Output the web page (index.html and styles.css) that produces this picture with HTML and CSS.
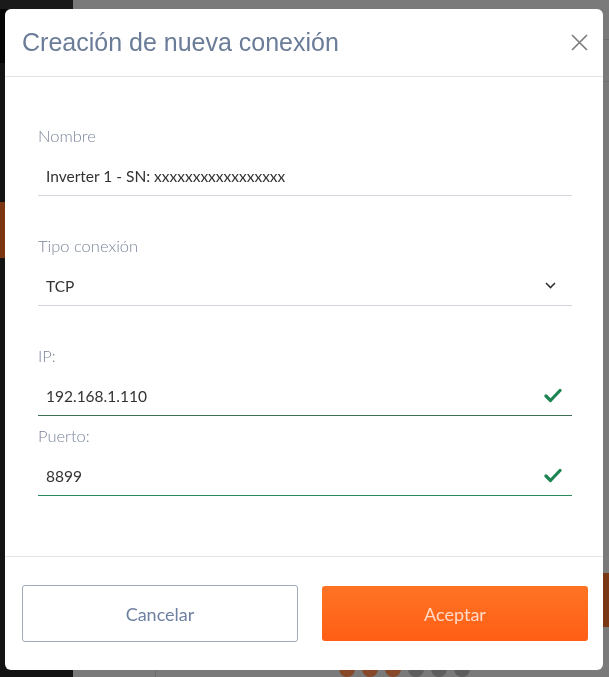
FILE: index.html
```html
<!DOCTYPE html>
<html lang="es">
<head>
<meta charset="utf-8">
<title>Creación de nueva conexión</title>
<link rel="stylesheet" href="styles.css">
</head>
<body>
<div class="page">
  <aside class="sidebar">
    <div class="side-top"></div>
    <div class="side-logo"></div>
    <div class="side-item"></div>
  </aside>
  <main class="main">
    <div class="main-top"></div>
    <div class="main-sub"></div>
    <div class="main-action"></div>
    <div class="main-bottom">
      <div class="main-left"></div>
      <div class="dots">
        <span class="dot dot-on"></span>
        <span class="dot dot-on"></span>
        <span class="dot dot-on"></span>
        <span class="dot"></span>
        <span class="dot"></span>
        <span class="dot"></span>
      </div>
    </div>
  </main>
</div>

<div class="modal" role="dialog">
  <header class="modal-header">
    <h1 class="modal-title">Creación de nueva conexión</h1>
    <button class="close" aria-label="Cerrar">
      <svg width="17" height="17" viewBox="0 0 17 17"><path d="M1 1L16 16M16 1L1 16" stroke="#7b7b7b" stroke-width="1.6" fill="none"/></svg>
    </button>
  </header>
  <section class="modal-body">
    <div class="field">
      <label class="label">Nombre</label>
      <div class="input">Inverter 1 - SN: xxxxxxxxxxxxxxxxx</div>
    </div>
    <div class="field field-gap">
      <label class="label">Tipo conexión</label>
      <div class="input">
        <span>TCP</span>
        <svg class="chevron" width="11" height="7" viewBox="0 0 11 7"><path d="M1 1L5.5 5.5L10 1" stroke="#333" stroke-width="1.6" fill="none"/></svg>
      </div>
    </div>
    <div class="field field-gap">
      <label class="label">IP:</label>
      <div class="input input-ok input-ok-dark">
        <span>192.168.1.110</span>
        <svg class="check" width="18" height="15" viewBox="0 0 18 15"><path d="M2 8L6.5 12.5L16 2.5" stroke="#1c8553" stroke-width="3.2" fill="none" stroke-linecap="round" stroke-linejoin="round"/></svg>
      </div>
    </div>
    <div class="field field-tight">
      <label class="label">Puerto:</label>
      <div class="input input-ok">
        <span>8899</span>
        <svg class="check" width="18" height="15" viewBox="0 0 18 15"><path d="M2 8L6.5 12.5L16 2.5" stroke="#1c8553" stroke-width="3.2" fill="none" stroke-linecap="round" stroke-linejoin="round"/></svg>
      </div>
    </div>
  </section>
  <footer class="modal-footer">
    <button class="btn btn-cancel">Cancelar</button>
    <button class="btn btn-accept">Aceptar</button>
  </footer>
</div>
</body>
</html>
```

FILE: styles.css
```css
html, body {
  margin: 0;
  padding: 0;
  height: 100%;
  overflow: hidden;
}

body {
  background: #7a7a7a;
  font-family: "Lato", "Open Sans", "Liberation Sans", sans-serif;
}

.page {
  display: flex;
  height: 677px;
}

.sidebar {
  width: 73px;
  flex: none;
  background: #131313;
  display: flex;
  flex-direction: column;
}

.side-top {
  height: 9px;
  background: #1a1a1a;
}

.side-logo {
  height: 54px;
  background: #050505;
}

.side-item {
  margin-top: 139px;
  height: 56px;
  background: #7c3511;
}

.main {
  flex: 1;
  display: flex;
  flex-direction: column;
  background: #7a7a7a;
}

.main-top {
  height: 42px;
  border-bottom: 1px solid #6e6e6e;
}

.main-sub {
  height: 45px;
  border-bottom: 1px solid #707070;
}

.main-action {
  align-self: flex-end;
  width: 60px;
  height: 58px;
  margin-top: 491px;
  background: #7a3814;
}

.main-bottom {
  flex: 1;
  display: flex;
}

.main-left {
  width: 82px;
  border-right: 1px solid #6a6a6a;
}

.dots {
  display: flex;
  gap: 7px;
  padding-left: 183px;
  padding-top: 34px;
}

.dot {
  width: 16px;
  height: 16px;
  border-radius: 50%;
  background: #5e5e5e;
}

.dot-on {
  background: #87492a;
}

/* Modal */
.modal {
  position: fixed;
  top: 9px;
  left: 5px;
  width: 598px;
  height: 661px;
  background: #ffffff;
  border-radius: 6px;
  display: flex;
  flex-direction: column;
  overflow: hidden;
}

.modal-header {
  height: 68px;
  box-sizing: border-box;
  border-bottom: 1px solid #e2e3e8;
  display: flex;
  align-items: center;
  justify-content: space-between;
  padding: 0 15px 0 17px;
}

.modal-title {
  margin: 0;
  font-family: "Liberation Sans", Arial, sans-serif;
  font-weight: 400;
  font-size: 25px;
  color: #6a7c97;
}

.close {
  border: none;
  background: none;
  padding: 0;
  width: 17px;
  height: 17px;
  display: flex;
  cursor: pointer;
}

.modal-body {
  flex: 1;
  padding: 49px 31px 0 33px;
}

.field-gap {
  margin-top: 40px;
}

.field-tight {
  margin-top: 10px;
}

.label {
  display: block;
  font-size: 16.5px;
  line-height: 20px;
  font-weight: 300;
  color: #7b869b;
}

.input {
  margin-top: 10px;
  height: 40px;
  box-sizing: border-box;
  border-bottom: 1px solid #d5d6de;
  display: flex;
  align-items: center;
  justify-content: space-between;
  padding: 0 16px 0 8px;
  font-size: 15.5px;
  color: #333333;
}

.input-ok {
  padding-right: 10px;
  border-bottom-color: #2b8a5a;
}

.input-ok-dark {
  border-bottom-color: #3d6f55;
}

.modal-footer {
  border-top: 1px solid #e4e5ea;
  padding: 28px 15px 28px 17px;
  display: flex;
  justify-content: space-between;
  align-items: center;
}

.btn {
  font-family: "Lato", "Liberation Sans", sans-serif;
  font-size: 18px;
  border-radius: 3px;
  cursor: pointer;
}

.btn-cancel {
  width: 276px;
  height: 57px;
  background: #ffffff;
  border: 1px solid #a1abbd;
  color: #6e80a0;
}

.btn-accept {
  width: 266px;
  height: 55px;
  border: none;
  background: linear-gradient(#ff7424, #ff5e15);
  color: #ffdac8;
}
```
